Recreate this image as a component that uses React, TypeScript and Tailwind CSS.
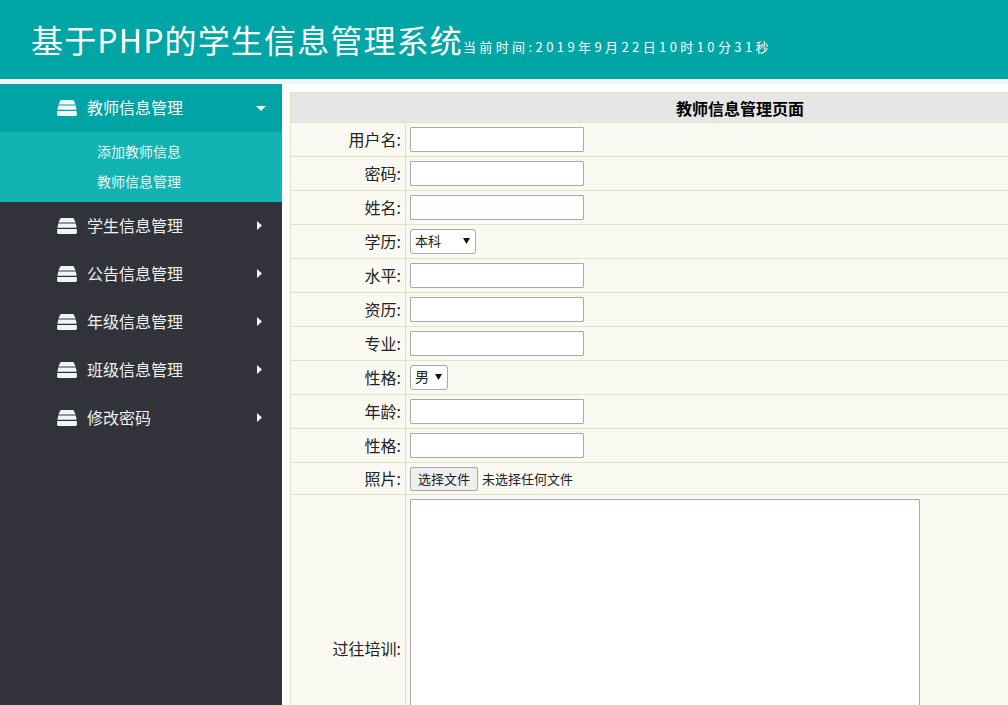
import React from 'react'

const font = { fontFamily: '"Noto Sans CJK SC", sans-serif' }

const StackIcon = () => (
  <svg width="20" height="16" viewBox="0 0 20 16" className="shrink-0" fill="#eef7f6">
    <path d="M4.5 0 H15.5 Q16.5 0 17 1 L18.6 4.4 H1.4 L3 1 Q3.5 0 4.5 0 Z" />
    <path d="M1.2 5.6 H18.8 L19.6 9.8 H0.4 Z" />
    <path d="M0.3 11 H19.7 L20 14.6 Q20 16 18.6 16 H1.4 Q0 16 0 14.6 Z" />
  </svg>
)

const CaretRight = () => (
  <svg width="5" height="9" viewBox="0 0 5 9" fill="#f4f4f4" className="mb-[2px]">
    <path d="M0 0 L5 4.5 L0 9 Z" />
  </svg>
)

const CaretDown = () => (
  <svg width="10" height="5" viewBox="0 0 10 5" fill="#eef7f6">
    <path d="M0 0 H10 L5 5 Z" />
  </svg>
)

const menus = ['学生信息管理', '公告信息管理', '年级信息管理', '班级信息管理', '修改密码']

const Sidebar = () => (
  <aside className="w-[282px] shrink-0 bg-[#32323a] h-full">
    <div className="h-12 bg-[#00a4a4] flex items-center pl-[57px] pr-[16px] text-white">
      <StackIcon />
      <span className="ml-[10px] pb-[2px] text-[16px] flex-1">教师信息管理</span>
      <CaretDown />
    </div>
    <div className="h-[70px] bg-[#11b4b2] pl-[97px] pt-[4px] text-[14px] text-[#eef7f6]">
      <div className="h-[30px] leading-[30px]">添加教师信息</div>
      <div className="h-[30px] leading-[30px]">教师信息管理</div>
    </div>
    {menus.map((m) => (
      <div key={m} className="h-12 flex items-center pl-[57px] pr-[20px] text-[#f0f0f0]">
        <StackIcon />
        <span className="ml-[10px] pb-[2px] text-[16px] flex-1">{m}</span>
        <CaretRight />
      </div>
    ))}
  </aside>
)

const Row = ({ label, tall, short, children }: { label: string; tall?: boolean; short?: boolean; children: React.ReactNode }) => (
  <tr>
    <td className="border border-[#dfe3c4] text-right pr-[4px] pb-[2px] text-[16px] text-[#222] leading-none">
      {label}:
    </td>
    <td className={`border border-[#dfe3c4] pl-[4px] align-middle ${tall ? 'pt-[4px]' : short ? 'h-[32px]' : 'h-[34px]'}`}>
      {children}
    </td>
  </tr>
)

const TextInput = () => (
  <input type="text" className="block w-[174px] h-[25px] bg-white border border-[#a9a9a9] rounded-[1px]" />
)

const SelectBox = ({ w, size, text }: { w: string; size: string; text: string }) => (
  <div className={`relative ${w} h-[25px]`}>
    <select
      style={font}
      defaultValue={text}
      className={`block appearance-none w-full h-full pl-[4px] pb-[2px] bg-white border border-[#a9a9a9] rounded-[3px] ${size} text-[#222]`}
    >
      <option>{text}</option>
    </select>
    <svg width="7" height="6" viewBox="0 0 7 6" fill="#111" className="absolute right-[6px] top-[9px] pointer-events-none">
      <path d="M0 0 H7 L3.5 6 Z" />
    </svg>
  </div>
)

const FormTable = () => (
  <table className="w-[800px] border-collapse bg-[#fafaf2] table-fixed">
    <colgroup>
      <col className="w-[115px]" />
      <col />
    </colgroup>
    <tbody>
      <tr>
        <th colSpan={2} className="h-[30px] bg-[#e6e6e6] border border-[#dfe3c4] text-[16px] font-bold text-black text-center">
          <span className="relative left-[50px]">教师信息管理页面</span>
        </th>
      </tr>
      <Row label="用户名"><TextInput /></Row>
      <Row label="密码"><TextInput /></Row>
      <Row label="姓名"><TextInput /></Row>
      <Row label="学历"><SelectBox w="w-[66px]" size="text-[13px]" text="本科" /></Row>
      <Row label="水平"><TextInput /></Row>
      <Row label="资历"><TextInput /></Row>
      <Row label="专业"><TextInput /></Row>
      <Row label="性格"><SelectBox w="w-[38px]" size="text-[14px]" text="男" /></Row>
      <Row label="年龄"><TextInput /></Row>
      <Row label="性格"><TextInput /></Row>
      <Row label="照片" short>
        <div className="flex items-center text-[13px] text-[#222]">
          <button className="h-[24px] w-[68px] bg-[#efefef] border border-[#a9a9a9] rounded-[2px] text-[13px] text-[#222] leading-none">
            选择文件
          </button>
          <span className="ml-[4px]">未选择任何文件</span>
        </div>
      </Row>
      <Row label="过往培训" tall>
        <textarea className="block w-[510px] h-[304px] bg-white border border-[#a9a9a9] rounded-[1px]" />
      </Row>
    </tbody>
  </table>
)

export default function App() {
  return (
    <div style={font} className="w-[1008px] h-[705px] overflow-hidden bg-white flex flex-col">
      <header className="h-[79px] shrink-0 bg-[#00a6a6] flex items-start pl-[31px] pt-[17px] text-white">
        <h1 className="text-[32px] leading-[44px] tracking-[1.15px] font-normal">基于PHP的学生信息管理系统</h1>
        <span className="mt-[20px] text-[13px] leading-[20px] tracking-[3.4px]">当前时间:2019年9月22日10时10分31秒</span>
      </header>
      <div className="h-[5px] shrink-0 bg-[#f2f6f6]" />
      <div className="flex flex-1 min-h-0">
        <Sidebar />
        <main className="flex-1 min-w-0 overflow-hidden pl-[8px] pt-[8px]">
          <FormTable />
        </main>
      </div>
    </div>
  )
}
